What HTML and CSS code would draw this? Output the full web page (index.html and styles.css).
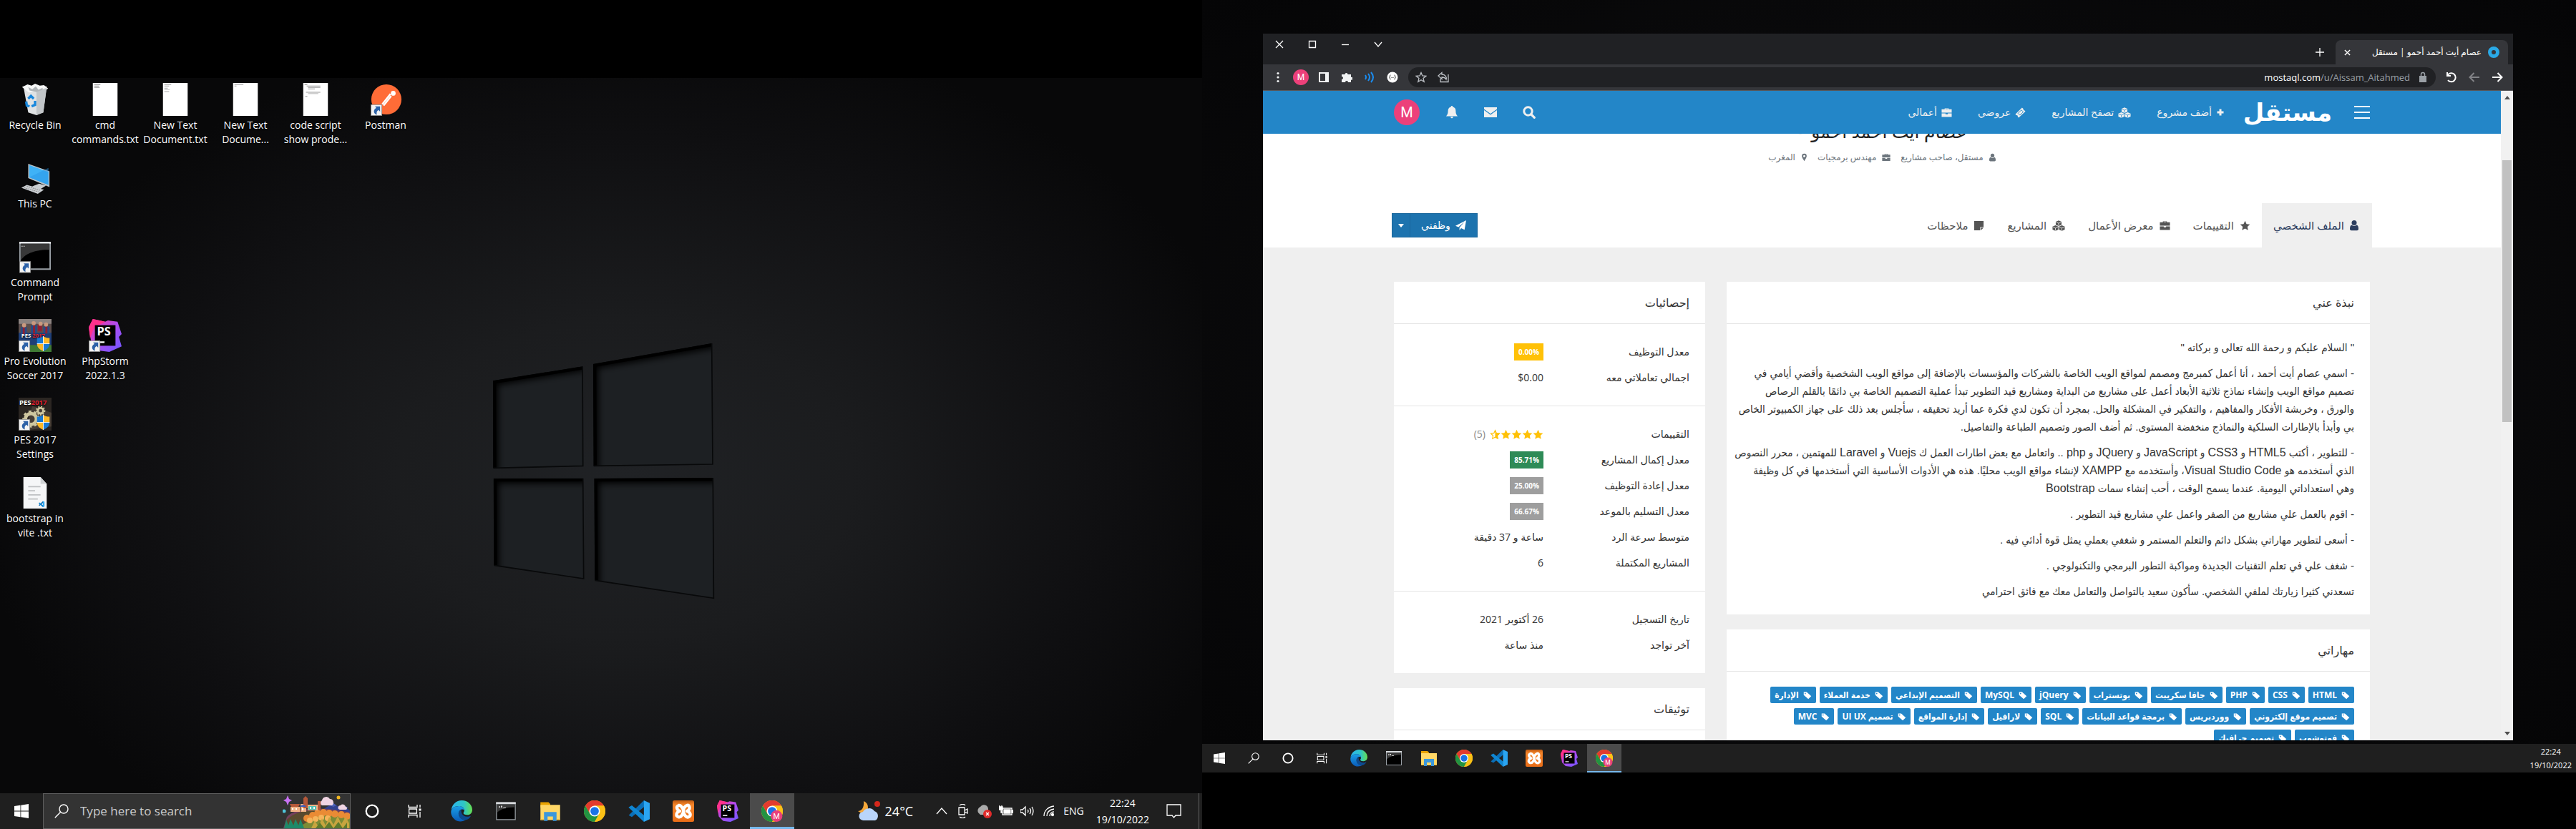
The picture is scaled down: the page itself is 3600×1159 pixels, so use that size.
FILE: index.html
```html
<!DOCTYPE html>
<html lang="en">
<head>
<meta charset="utf-8">
<title>Desktop</title>
<link rel="stylesheet" href="styles.css">
</head>
<body>
<svg class="defs" aria-hidden="true">
  <defs>
    <linearGradient id="gEdge" x1="0" y1="0" x2="1" y2="0"><stop offset="0" stop-color="#2bb5f0"/><stop offset=".6" stop-color="#2fc6c6"/><stop offset="1" stop-color="#66e04f"/></linearGradient>
    <linearGradient id="gEdge2" x1="0" y1="0" x2="0" y2="1"><stop offset="0" stop-color="#1a9fe8"/><stop offset="1" stop-color="#0a5bb8"/></linearGradient>
    <linearGradient id="gPs" x1="0" y1="0" x2="1" y2="1"><stop offset="0" stop-color="#ff318c"/><stop offset=".5" stop-color="#b04cf0"/><stop offset="1" stop-color="#6b57ff"/></linearGradient>
    <linearGradient id="gXampp" x1="0" y1="0" x2="0" y2="1"><stop offset="0" stop-color="#c05b12"/><stop offset=".2" stop-color="#f5852a"/><stop offset="1" stop-color="#e96d17"/></linearGradient>
    <filter id="soft" x="-20%" y="-20%" width="140%" height="140%"><feGaussianBlur stdDeviation="14"/></filter>
    <clipPath id="cTL"><path d="M153 250L528 190 530 607 154 616z"/></clipPath>
    <clipPath id="cTR"><path d="M573 180L1070 93 1074 600 575 607z"/></clipPath>
    <clipPath id="cBL"><path d="M155 660L530 659 533 1080 157 1024z"/></clipPath>
    <clipPath id="cBR"><path d="M577 660L1075 657 1078 1162 580 1087z"/></clipPath>
  </defs>
</svg>
<svg class="symbols" aria-hidden="true">
  <symbol id="i-win" viewBox="0 0 20 20"><path fill="#fff" d="M0 3l8.500-1.200V9.600H0zM9.300 1.700L20 0v9.600H9.300zM0 10.400h8.500v7.800L0 17zM9.300 10.400H20V20L9.300 18.300z"/></symbol>
  <symbol id="i-mag" viewBox="0 0 20 20"><g fill="none" stroke="#fff" stroke-width="1.400"><circle cx="13" cy="7" r="6"/><path d="M8.700 11.300L.8 19.200"/></g></symbol>
  <symbol id="i-cortana" viewBox="0 0 20 20"><circle cx="10" cy="10" r="8.300" fill="none" stroke="#fff" stroke-width="2.300"/></symbol>
  <symbol id="i-task" viewBox="0 0 20 20"><g fill="none" stroke="#fff" stroke-width="1.300"><path d="M1 1v3.500h12V1M1 19v-3.500h12V19M1.600 7h10.800v6H1.600zM17 1v4M17 11v8"/><path d="M15.500 6.500h3v3h-3z" fill="#fff" stroke="none"/></g></symbol>
  <symbol id="i-edge" viewBox="0 0 24 24"><path fill="url(#gEdge)" d="M.5 11C1 5 6 0 12.300 0 19 0 24 5 24 10.500c0 3.500-2.500 5.700-5.600 5.700-2.900 0-4.300-1-4.300-2 0-.8 1-1.400 1-3.200C15 8 12 6.300 9 6.300 4.500 6.300 1 8.500.5 11z"/><path fill="url(#gEdge2)" d="M.3 12C.8 8.500 4.500 6.300 9 6.300c3.500 0 6 2 6.100 4.500-3-2-6.400.5-6.400 4.200 0 4 4 7 7.800 6.800C14.500 23.500 8 25 4 21 1 18.400-.1 15.300.3 12z"/><path fill="#0c4a8f" d="M8.700 15c0-2.500 1.500-4.300 3.200-4.800-1 3 1 8 6.500 8 1.700 0 3-.5 4.200-1-1.500 3-4 4.800-6.800 4.800C12 22 8.700 19 8.700 15z"/></symbol>
  <symbol id="i-cmd" viewBox="0 0 24 24"><path fill="#9aa0a6" d="M1 2h22v20H1z"/><path fill="#d8dadd" d="M1 2h22v2H1z"/><path fill="#000" d="M2 4.500h20V21H2z"/><path fill="#3a3a3a" d="M2 4.500h20v3C12 7.500 5 10 2 14z"/><path fill="#ddd" d="M4 6.500h1.500V8H4zM6.500 6H8v2H6.500zM9 8h3v.8H9z"/></symbol>
  <symbol id="i-folder" viewBox="0 0 24 24"><path fill="#e8a200" d="M1 2h9l2 2v4H1z"/><path fill="#ffd766" d="M1 5h22v17H1z"/><path fill="#3b97dc" d="M5 13h14v10h-4v-5H9v5H5z"/><path fill="#e9b53a" d="M1 21h4v1H1zM19 21h4v1h-4z"/></symbol>
  <symbol id="i-chrome" viewBox="0 0 24 24"><circle cx="12" cy="12" r="12" fill="#fbc116"/><path fill="#e33b2e" d="M1.600 6A12 12 0 0 1 22.400 6H12l-5.200 9z"/><path fill="#229342" d="M1.600 6A12 12 0 0 0 12 24l5.200-9L12 12l-5.200 3z"/><path fill="#fbc116" d="M22.400 6H12l5.200 9L12 24A12 12 0 0 0 22.400 6z"/><circle cx="12" cy="12" r="6" fill="#fff"/><circle cx="12" cy="12" r="4.700" fill="#1a73e8"/></symbol>
  <symbol id="i-code" viewBox="0 0 24 24"><path fill="#0a6fb8" d="M17.500 0L18 7 4 18.500.5 16.500z"/><path fill="#0f86d2" d="M.5 7.500L4 5.500 18 17l-.5 7L.5 8z"/><path fill="#2aa5f2" d="M17.500 0L24 3v18l-6.500 3z"/></symbol>
  <symbol id="i-xampp" viewBox="0 0 24 24"><rect width="24" height="24" rx="2" fill="url(#gXampp)"/><path fill="none" stroke="#fff" stroke-width="3.400" stroke-linecap="round" stroke-linejoin="round" d="M7 5.500C3 7 5 11 8 12c-4 1-5 5.500-1.500 6.500S12 14 12 12s1-5 4-6.500 4.500 5 0 6.500c4 1 5 5 2 6.500S12 15 12 12 9 5 7 5.500z"/></symbol>
  <symbol id="i-ps" viewBox="0 0 24 24"><path fill="url(#gPs)" d="M0 6L3 0l9 2 2-1 7 1 3 9-2 2 2 7-9 4-8-1-5-5z"/><path fill="#ff318c" d="M0 6L3 0l9 2-8 4-3 8z"/><path fill="#000" d="M4.500 4.500h15v15h-15z"/><path fill="#fff" d="M6.500 16.300h5v1.200h-5z"/><text x="6" y="12" font-family="Open Sans, sans-serif" font-size="8.500" font-weight="700" fill="#fff">PS</text></symbol>
  <symbol id="i-chromem" viewBox="0 0 24 24"><use href="#i-chrome"/><circle cx="17" cy="17.500" r="6.500" fill="#e8407a"/><text x="17" y="20.500" text-anchor="middle" font-family="Roboto, sans-serif" font-size="8.500" fill="#fff">M</text></symbol>
  <symbol id="i-link" viewBox="0 0 16 16"><path fill="#f4f4f4" stroke="#8a8a8a" d="M.5.5h15v15H.5z"/><path fill="#2d62a8" d="M6 3h7v7l-2.200-2C8.500 9.500 8 11 8.500 14.500 4 13 3 8 7.800 5z"/></symbol>
  <symbol id="i-shield" viewBox="0 0 20 24"><path fill="#1979d3" d="M10 0v12H0V3c4 0 7-1 10-3z"/><path fill="#fdb827" d="M10 0v12h10V3c-4 0-7-1-10-3zM0 12h10v12C4 21 0 18 0 12z"/><path fill="#1979d3" d="M10 12h10c0 6-4 9-10 12z"/><path stroke="#fff" d="M10 0v24M0 12h20"/></symbol>
  <symbol id="f-plus" viewBox="0 0 16 16"><path d="M6 2h4v4h4v4h-4v4H6v-4H2V6h4z"/></symbol>
  <symbol id="f-cubes" viewBox="0 0 20 16"><path d="M10 0l4.500 2v4.500L10 8.500 5.500 6.500V2zM5 7.500L9.500 9.500V14L5 16 .5 14V9.500zM15 7.500l4.500 2V14L15 16l-4.500-2V9.500z"/><path fill="none" stroke="var(--cut,#fff)" stroke-width=".8" d="M6 2.500l4 1.700 4-1.700M10 4.200V8M1 10l4 1.700L9 10M5 11.700v4M11 10l4 1.700 4-1.700M15 11.700v4"/></symbol>
  <symbol id="f-ticket" viewBox="0 0 16 16"><path d="M10.500.5l2 2a1.500 1.500 0 0 0 1.500 2l1.500 1.500L5.500 15.500 4 14a1.500 1.500 0 0 0-2-2L.5 10.500z"/><path fill="none" stroke="var(--cut,#fff)" d="M9.500 4l2.800 2.800-5 5L4.500 9z"/></symbol>
  <symbol id="f-case" viewBox="0 0 16 16"><path d="M5 3V1.500h6V3h4.500v5h-15V3zM6.200 3h3.600v-.6H6.200zM.5 9h5.800v1.500h3.400V9h5.800v5.500H.5z"/></symbol>
  <symbol id="f-user" viewBox="0 0 12 16"><circle cx="6" cy="4.500" r="3.500"/><path d="M2.500 7.500C4 9.300 8 9.300 9.500 7.500 11.500 8 12 10.500 12 13c0 1.500-1 2.200-2 2.200H2c-1 0-2-.7-2-2.200 0-2.500.5-5 2.500-5.500z"/></symbol>
  <symbol id="f-pin" viewBox="0 0 10 16"><path fill-rule="evenodd" d="M5 1a4.500 4.500 0 0 1 4.500 4.500C9.500 8 7 11 5 15 3 11 .5 8 .5 5.500A4.500 4.500 0 0 1 5 1zm0 2.500a2 2 0 1 0 0 4 2 2 0 0 0 0-4z"/></symbol>
  <symbol id="f-star" viewBox="0 0 16 16"><path d="M8 .8l2.200 4.700 5.100.6-3.800 3.500 1 5.100L8 12.200l-4.500 2.500 1-5.100L.7 6.100l5.100-.6z"/></symbol>
  <symbol id="f-half" viewBox="0 0 16 16"><path fill="none" stroke="#ffc107" stroke-width="1.200" d="M8 1.800l1.900 4.200 4.500.5-3.300 3.100.9 4.500L8 11.900l-4 2.200.9-4.500L1.600 6.500 6.100 6z"/><path d="M8 .8l2.200 4.700 5.100.6-3.800 3.500 1 5.100L8 12.200z"/></symbol>
  <symbol id="f-note" viewBox="0 0 16 16"><path d="M1 1h14v9h-5v5H1zM11 11h4l-4 4z"/></symbol>
  <symbol id="f-plane" viewBox="0 0 16 16"><path d="M16 0l-2.500 14-5-2.200L6 15v-4.200L13.500 2 4.500 10 0 8.300z"/></symbol>
  <symbol id="f-tag" viewBox="0 0 16 16"><path fill-rule="evenodd" d="M1 2h5.500L15 9.500 9.500 15 1 7.500zM3.700 3.700a1.100 1.100 0 1 0 .1 2.200 1.100 1.100 0 0 0-.1-2.200z"/></symbol>
  <symbol id="f-bell" viewBox="0 0 18 20"><path d="M9 0c1 0 1.500.7 1.500 1.600C14 2.500 15 5 15 8c0 4 1 6 3 8H0c2-2 3-4 3-8 0-3 1-5.500 4.500-6.400C7.500.7 8 0 9 0zM7 17h4c0 3-4 3-4 0z"/></symbol>
  <symbol id="f-mail" viewBox="0 0 18 18"><path d="M0 2h18v2.500L9 11 0 4.500zM0 6l9 6.500L18 6v10H0z"/></symbol>
  <symbol id="f-search" viewBox="0 0 18 18"><circle cx="7.500" cy="7.500" r="5.700" fill="none" stroke="#efefef" stroke-width="3"/><path stroke="#efefef" stroke-width="3.200" stroke-linecap="round" d="M12 12l4.300 4.300"/></symbol>
</svg>

<div class="screens">
  <section class="screen primary">
    <div class="wallpaper">
      <svg class="winlogo" viewBox="0 0 1260 1260" aria-hidden="true">
        <g fill="#1d2023"><path d="M153 250L528 190 530 607 154 616z"/><path d="M573 180L1070 93 1074 600 575 607z"/><path d="M155 660L530 659 533 1080 157 1024z"/><path d="M577 660L1075 657 1078 1162 580 1087z"/></g>
        <g fill="none" stroke="#000" stroke-width="42">
          <g clip-path="url(#cTL)"><path filter="url(#soft)" d="M540 186L153 250 154 640"/><path d="M528 190L153 250 154 616" stroke-width="26"/></g>
          <g clip-path="url(#cTR)"><path filter="url(#soft)" d="M1090 90L573 180 575 630"/><path d="M1070 93L573 180 575 607" stroke-width="26"/></g>
          <g clip-path="url(#cBL)"><path filter="url(#soft)" d="M550 659L155 660 157 1050"/><path d="M530 659L155 660 157 1024" stroke-width="26"/></g>
          <g clip-path="url(#cBR)"><path filter="url(#soft)" d="M1095 657L577 660 580 1110"/><path d="M1075 657L577 660 580 1087" stroke-width="26"/></g>
        </g>
        <g fill="none" stroke="#08090a" stroke-width="5"><path d="M528 190L530 607 154 616M1070 93L1074 600 575 607M530 659L533 1080 157 1024M1075 657L1078 1162 580 1087"/></g>
      </svg>
      <ul class="icons">
        <li><svg viewBox="0 0 48 48"><path fill="#dfe2e4" d="M7 5l34 0-5 38-10 4-12-4z"/><path fill="#f7f8f8" d="M5 6l8-4 6 2 5-3 7 3 6-1 6 5-7 5-10-2-11 3z"/><path fill="#c2c6c9" d="M26 12l15-5-5 36-10 4z"/><path fill="#b0b5b8" d="M14 6l6 3 5-4 4 5 6-3v3l-9 3-10-2z"/><g fill="none" stroke="#1787dd" stroke-width="3.500"><path d="M14 23l4-4 4 4M24 26l0 6-5 2M11 27l1 6 4 1"/></g></svg><span>Recycle Bin</span></li>
        <li><svg viewBox="0 0 48 48"><path fill="#fff" d="M6 0h36v48H6z"/><path fill="#999" d="M8 2h9v1H8zM8 4h7v1H8zM8 6h8v1H8z"/></svg><span>cmd commands.txt</span></li>
        <li><svg viewBox="0 0 48 48"><path fill="#fff" d="M6 0h36v48H6z"/><path fill="#aaa" d="M8 2h10v1H8zM8 4h7v1H8zM8 7h5v1H8zM8 9h8v1H8zM8 12h7v1H8z"/></svg><span>New Text Document.txt</span></li>
        <li><svg viewBox="0 0 48 48"><path fill="#fff" d="M6 0h36v48H6z"/><path fill="#aaa" d="M8 2h13v1H8zM8 4h3v1H8z"/></svg><span>New Text Docume...</span></li>
        <li><svg viewBox="0 0 48 48"><path fill="#fff" d="M6 0h36v48H6z"/><path fill="#999" d="M8 2h4v1H8zM11 4h20v1H11zM13 6h18v1H13zM13 8h10v1H13zM10 13h21v1H10zM13 15h15v1H13zM9 19h3v1H9z"/></svg><span>code script show prode...</span></li>
        <li><svg viewBox="0 0 48 48"><circle cx="25" cy="24" r="22" fill="#ff6c37"/><g stroke="#fff" fill="none" stroke-width="2.500"><path d="M19 31l12-15M21 33l11-14"/></g><circle cx="35" cy="15" r="3.500" fill="#fff"/><use href="#i-link" x="2" y="31" width="17" height="17"/></svg><span>Postman</span></li>
        <li class="newrow"><svg viewBox="0 0 48 48"><path fill="#bcc3c9" d="M14 3l31 11v23L14 24z"/><path fill="#3fb2f6" d="M15.500 5l28 10v19l-28-11z"/><path fill="#2996e6" d="M15.500 23l28-14v25z" opacity=".5"/><path fill="#c9cdd1" d="M20 36l10-4 10 3-8 5zM4 38l8-4 25 7-9 6z"/><path stroke="#888" d="M8 38l21 6M12 36l20 6" stroke-dasharray="2 1"/></svg><span>This PC</span></li>
        <li class="newrow"><svg viewBox="0 0 48 48"><path fill="#9aa0a6" d="M1 2h46v41H1z"/><path fill="#e6e8ea" d="M1 2h46v3H1z"/><path fill="#000" d="M3 5h42v36H3z"/><path fill="#383838" d="M3 5h42v9C25 13 8 20 3 30z"/><path fill="#ccc" d="M4 8h2v1H4zM7 8h2v1H7z"/><use href="#i-link" x="1" y="30" width="17" height="18"/></svg><span>Command Prompt</span></li>
        <li class="newrow"><svg viewBox="0 0 48 48"><path fill="#5b4e4c" d="M0 0h48v48H0z"/><path fill="#8c8380" d="M0 0h48v7H0z"/><path fill="#1f3f77" d="M0 20h48v18H0z"/><path fill="#3f7a35" d="M0 38h48v10H0z"/><path fill="#274a86" d="M3 12h9v10H3zM18 9h9v12h-9zM36 11h9v10h-9z"/><path fill="#8e2033" d="M6 12h3v10H6zM21 9h3v12h-3zM39 11h3v10h-3zM28 8h6v10h-6z"/><g fill="#c99a80"><circle cx="8" cy="9" r="3"/><circle cx="22" cy="6" r="3"/><circle cx="32" cy="7" r="3"/><circle cx="40" cy="8" r="3"/></g><text x="4" y="27" font-family="Open Sans, sans-serif" font-size="8" font-weight="700" fill="#fff">PES <tspan fill="#e02030">2017</tspan></text><use href="#i-link" x="0" y="31" width="17" height="17"/><use href="#i-shield" x="26" y="25" width="20" height="22"/></svg><span>Pro Evolution Soccer 2017</span></li>
        <li><svg viewBox="0 0 48 48"><use href="#i-ps" width="48" height="48"/><use href="#i-link" x="0" y="31" width="17" height="17"/></svg><span>PhpStorm 2022.1.3</span></li>
        <li class="newrow"><svg viewBox="0 0 48 48"><path fill="#2b2622" d="M0 0h48v48H0z"/><path fill="#463d35" d="M20 12L48 22v20L10 48z"/><g fill="none" stroke="#cfc7a0"><circle cx="18" cy="31" r="8" stroke-width="5"/><circle cx="18" cy="31" r="11" stroke-width="3" stroke-dasharray="4 4"/><circle cx="32" cy="19" r="4" stroke-width="3"/><circle cx="32" cy="19" r="6" stroke-width="2" stroke-dasharray="2 2"/></g><text x="1" y="10" font-family="Open Sans, sans-serif" font-size="10" font-weight="700" fill="#fff">PES<tspan fill="#e02030">2017</tspan></text><use href="#i-link" x="0" y="31" width="17" height="17"/><use href="#i-shield" x="26" y="25" width="20" height="22"/></svg><span>PES 2017 Settings</span></li>
        <li class="newrow"><svg viewBox="0 0 48 48"><path fill="#f5f6f7" d="M7 1h25l9 10v36H7z"/><path fill="#cfd2d4" d="M32 1v10h9z"/><path fill="#bfc1c3" d="M14 14h18v2H14zM14 20h10v2H14zM14 26h18v2H14zM14 32h14v2H14z"/><use href="#i-code" x="29" y="36" width="9" height="9"/></svg><span>bootstrap in vite .txt</span></li>
      </ul>
    </div>
    <footer class="taskbar big">
      <button class="start" aria-label="Start"><svg><use href="#i-win"/></svg></button>
      <label class="search"><svg class="mag"><use href="#i-mag"/></svg><input type="text" placeholder="Type here to search" aria-label="Search">
        <svg class="art" viewBox="0 0 94 46"><path fill="#32418f" d="M50 24l12-8 9-5 9 6 7-1 7 5v7H50z"/><path fill="#4c5fb5" d="M66 14l5-3 4 3-4 2zM84 17l4-2 4 3z"/><path fill="#74405c" d="M1 46L6 30C18 16 60 16 94 24v22z"/><path fill="#594a2f" d="M6 34C20 18 55 18 94 26v20H3z"/><path fill="#7c8b35" d="M20 46L52 26l42 0v20z"/><g fill="#ea8b35"><circle cx="34" cy="32" r="5"/><circle cx="42" cy="28" r="5"/><circle cx="49" cy="25" r="5"/><circle cx="57" cy="24" r="5"/><circle cx="65" cy="25" r="5"/><circle cx="73" cy="26" r="5"/><circle cx="82" cy="27" r="5"/><circle cx="90" cy="29" r="5"/></g><g fill="#f7b45b"><circle cx="38" cy="35" r="4"/><circle cx="46" cy="33" r="4"/><circle cx="54" cy="31" r="4"/><circle cx="63" cy="32" r="4"/></g><path fill="#c7a53f" d="M40 46l5-11 5 9 5-12 5 10 5-12 6 11 6-12 5 11 6-10 5 9v7z"/><path fill="#5d7a2c" d="M46 46l6-8 6 8 7-9 6 9 7-9 6 9 6-8v8z"/><path fill="#1d8a69" d="M2 46l3-12 3 8 3-9 4 9 3-9 4 9 3-9 5 13z"/><path fill="#f0b186" d="M11 16h13v7H11zM25 12h8v11h-8zM35 13h14v8H35z"/><path fill="#b5583a" d="M10 12h14l-2 4H12zM29 4l3-3 3 3v14h-6zM49 8h4v12h-4z"/><path fill="#3b5fbf" d="M24 16a5 5 0 0 1 9 0z"/><path fill="#4fc1b5" d="M36 15h11v5H36z"/><path fill="#fff" d="M13 18h2v2h-2zM18 18h2v2h-2zM27 18h2v3h-2zM38 16h2v3h-2zM43 16h2v3h-2z"/><path fill="#f0d5e3" d="M55 14a4 4 0 0 1 0-7 6 6 0 0 1 11-2 5 5 0 0 1 3 9zM80 20a3 3 0 0 1 1-6 4 4 0 0 1 7 2 2 2 0 0 1 0 4z"/><circle cx="78" cy="3" r="2.500" fill="#f5b820"/><circle cx="2" cy="22" r="2.500" fill="#4fc7dd"/><path fill="#c973f5" d="M7 0l2 5 4 2-4 2-2 5-2-5-4-2 4-2z"/></svg>
      </label>
      <button aria-label="Cortana"><svg><use href="#i-cortana"/></svg></button>
      <button aria-label="Task view"><svg><use href="#i-task"/></svg></button>
      <nav class="apps">
        <button aria-label="Edge"><svg><use href="#i-edge"/></svg></button>
        <button aria-label="Command Prompt"><svg><use href="#i-cmd"/></svg></button>
        <button aria-label="File Explorer"><svg><use href="#i-folder"/></svg></button>
        <button aria-label="Chrome"><svg><use href="#i-chrome"/></svg></button>
        <button aria-label="VS Code"><svg><use href="#i-code"/></svg></button>
        <button aria-label="XAMPP"><svg><use href="#i-xampp"/></svg></button>
        <button aria-label="PhpStorm"><svg><use href="#i-ps"/></svg></button>
        <button class="active" aria-label="Chrome profile M"><svg><use href="#i-chromem"/></svg></button>
      </nav>
      <div class="weather"><svg viewBox="0 0 32 28"><path fill="#f5a83a" d="M8 0c8 3 8 14 0 19L0 14c5 0 9-5 8-14z"/><circle cx="27" cy="4" r="4" fill="#d4281c"/><path fill="#b9d5fa" d="M8 27a6 6 0 0 1-1-12 9 8 0 0 1 16-1 7 7 0 0 1 1 13z"/></svg><span>24°C</span></div>
      <div class="tray">
        <svg viewBox="0 0 20 20"><path d="M3 14l7-8 7 8"/></svg>
        <svg viewBox="0 0 20 20"><path d="M4 5h8v10H4zM12 9l4-2v6l-4-2M5 2c3-2 6-2 8 0M5 18c3 2 6 2 8 0"/></svg>
        <svg viewBox="0 0 20 20"><path fill="#aaa" stroke="none" d="M1 12a6 6 0 0 1 3-8 6 6 0 0 1 11 3v8H4z"/><circle cx="14" cy="14" r="6" fill="#e02b2b" stroke="none"/><path d="M12 12l4 4m0-4l-4 4"/></svg>
        <svg viewBox="0 0 20 20"><path d="M5 6h13v9H5z"/><path fill="#fff" d="M7 8h9v5H7zM18 9h2v3h-2zM0 4h5v4H0zM1 2v2M4 2v2M3 8v4h2"/></svg>
        <svg viewBox="0 0 20 20"><path d="M0 8h3l4-4v12l-4-4H0zM10 8q2 2 0 4M13 6q3 4 0 8M16 4q4 6 0 12"/></svg>
        <svg viewBox="0 0 20 20"><path d="M3 17C3 9 9 4 17 3M7 17c0-6 4-9 10-10M11 17c0-3 2-6 6-6"/><circle cx="15" cy="15" r="1.500" fill="#fff"/></svg>
        <span>ENG</span>
      </div>
      <time class="clock"><span>22:24</span><span>19/10/2022</span></time>
      <button class="notify" aria-label="Notifications"><svg viewBox="0 0 22 22"><path fill="none" stroke="#fff" stroke-width="1.300" d="M1 2h19v15h-7l-2.500 3L8 17H1z"/></svg></button>
    </footer>
  </section>

  <section class="screen secondary">
    <div class="desk">
      <div class="window" dir="rtl" lang="ar">
        <div class="titlebar">
          <div class="tab"><svg class="fav" viewBox="0 0 16 16"><circle cx="8" cy="8" r="5.500" fill="none" stroke="#2aa9e6" stroke-width="5"/></svg><span>عصام أيت أحمد أحمو | مستقل</span><button aria-label="إغلاق"><svg viewBox="0 0 10 10"><path d="M1 1l8 8m0-8L1 9"/></svg></button></div>
          <button class="newtab" aria-label="تبويب جديد"><svg viewBox="0 0 12 12"><path d="M6 0v12M0 6h12"/></svg></button>
          <div class="controls">
            <button aria-label="قائمة"><svg viewBox="0 0 12 12"><path d="M1 3l5 6 5-6"/></svg></button>
            <button aria-label="تصغير"><svg viewBox="0 0 12 12"><path d="M1 6.500h10"/></svg></button>
            <button aria-label="تكبير"><svg viewBox="0 0 12 12"><path d="M1.500 1.500h9v9h-9z"/></svg></button>
            <button aria-label="إغلاق النافذة"><svg viewBox="0 0 12 12"><path d="M1 1l10 10M11 1L1 11"/></svg></button>
          </div>
        </div>
        <div class="toolbar">
          <button aria-label="السابق"><svg viewBox="0 0 16 16"><path d="M1 8h13M8.500 2l6 6-6 6"/></svg></button>
          <button class="dim" aria-label="التالي"><svg viewBox="0 0 16 16"><path d="M15 8H2M7.500 2l-6 6 6 6"/></svg></button>
          <button aria-label="تحديث"><svg viewBox="0 0 16 16"><path d="M3 4.500A6 6 0 1 1 3 12M2 1v5h5"/></svg></button>
          <div class="omnibox">
            <svg class="lock" viewBox="0 0 12 16"><path fill="#9aa0a6" d="M1 6h10v9H1z"/><path fill="none" stroke="#9aa0a6" stroke-width="1.500" d="M3.500 6V4a2.500 2.500 0 0 1 5 0v2"/></svg>
            <span class="url" dir="ltr"><b>mostaql.com</b>/u/Aissam_Aitahmed</span>
            <button aria-label="مشاركة"><svg viewBox="0 0 16 16"><path d="M4 10v4.500h11V4M1 6l5-4.500V4c5 0 7 4 6 7-1-2-3-3-6-3v2.500z"/></svg></button>
            <button aria-label="إضافة إلى المفضلة"><svg viewBox="0 0 16 16"><path d="M8 1.500l1.900 4.500 4.800.4-3.700 3.200 1.200 4.700L8 11.800l-4.200 2.500L5 9.600 1.300 6.400 6.100 6z"/></svg></button>
          </div>
          <div class="exts">
            <svg viewBox="0 0 16 16"><circle cx="8" cy="8" r="7.500" fill="#fff"/><path fill="none" stroke="#333" d="M5.500 5Q4 5 4.500 7L3.500 8l1 1Q4 11 5.500 11M10.500 5Q12 5 11.500 7l1 1-1 1Q12 11 10.500 11M6.500 8.500h1M8.500 8.500h1"/></svg>
            <svg viewBox="0 0 16 16"><path fill="none" stroke="#1a8cf0" stroke-width="2" d="M2 5q2 3 0 6M6 3q4 5 0 10M10 1q6 7 0 14"/></svg>
            <svg viewBox="0 0 16 16"><path fill="#f1f3f4" d="M1 4h4.500a2 2 0 1 1 4 0H14v4a2 2 0 1 1 0 3.500V15h-4a2 2 0 0 0-4 0H1v-4a2 2 0 1 0 0-4z"/></svg>
            <svg viewBox="0 0 16 16"><path fill="none" stroke="#f1f3f4" stroke-width="2" d="M2 2h12v12H2z"/><path fill="#f1f3f4" d="M10 1h5v14h-5z"/></svg>
            <span class="who">M</span>
            <svg viewBox="0 0 16 16"><g fill="#f1f3f4"><circle cx="8" cy="2.500" r="1.600"/><circle cx="8" cy="8" r="1.600"/><circle cx="8" cy="13.500" r="1.600"/></g></svg>
          </div>
        </div>
        <div class="viewport">
          <div class="scroll" aria-hidden="true"><i class="up"></i><i class="thumb"></i><i class="down"></i></div>
          <div class="page">
            <header class="site">
              <div class="wrap">
                <button class="menu" aria-label="القائمة"><i></i><i></i><i></i></button>
                <a class="logo" href="#">مستقل</a>
                <nav>
                  <a href="#"><svg class="w12"><use href="#f-plus"/></svg>أضف مشروع</a>
                  <a href="#"><svg class="w18"><use href="#f-cubes"/></svg>تصفح المشاريع</a>
                  <a href="#"><svg class="w15"><use href="#f-ticket"/></svg>عروضي</a>
                  <a href="#"><svg class="w15"><use href="#f-case"/></svg>أعمالي</a>
                </nav>
                <div class="acts">
                  <button aria-label="بحث"><svg><use href="#f-search"/></svg></button>
                  <button aria-label="الرسائل"><svg><use href="#f-mail"/></svg></button>
                  <button aria-label="الإشعارات"><svg><use href="#f-bell"/></svg></button>
                  <a class="avatar" href="#">M</a>
                </div>
              </div>
            </header>
            <div class="profile">
              <h1>عصام أيت أحمد أحمو<i></i></h1>
              <ul class="meta">
                <li><svg class="w9"><use href="#f-user"/></svg>مستقل، صاحب مشاريع</li>
                <li><svg class="w12"><use href="#f-case"/></svg>مهندس برمجيات</li>
                <li><svg class="w9"><use href="#f-pin"/></svg>المغرب</li>
              </ul>
              <div class="tabs">
                <a class="on" href="#"><svg class="w12"><use href="#f-user"/></svg>الملف الشخصي</a>
                <a href="#"><svg class="w15"><use href="#f-star"/></svg>التقييمات</a>
                <a href="#"><svg class="w15"><use href="#f-case"/></svg>معرض الأعمال</a>
                <a href="#"><svg class="w18"><use href="#f-cubes"/></svg>المشاريع</a>
                <a href="#"><svg class="w15"><use href="#f-note"/></svg>ملاحظات</a>
                <div class="hire"><button><svg class="w15"><use href="#f-plane"/></svg>وظفني</button><button class="more" aria-label="المزيد"></button></div>
              </div>
            </div>
            <main class="wrap cols">
              <div class="col">
                <section class="card">
                  <h2>نبذة عني</h2>
                  <div class="bio">
                    <p>" السلام عليكم و رحمة الله تعالى و بركاته "</p>
                    <p>- اسمي عصام أيت أحمد ، أنا أعمل كمبرمج ومصمم لمواقع الويب الخاصة بالشركات والمؤسسات بالإضافة إلى مواقع الويب الشخصية وأقضي أيامي في<br>تصميم مواقع الويب وإنشاء نماذج ثلاثية الأبعاد أعمل على مشاريع من البداية ومشاريع قيد التطوير تبدأ عملية التصميم الخاصة بي دائمًا بالقلم الرصاص<br>والورق ، وخربشة الأفكار والمفاهيم ، والتفكير في المشكلة والحل. بمجرد أن تكون لدي فكرة عما أريد تحقيقه ، سأجلس بعد ذلك على جهاز الكمبيوتر الخاص<br>بي وأبدأ بالإطارات السلكية والنماذج منخفضة المستوى. ثم أضف الصور وتصميم الطباعة والتفاصيل.</p>
                    <p>- للتطوير ، أكتب <bdi>HTML5</bdi> و <bdi>CSS3</bdi> و <bdi>JavaScript</bdi> و <bdi>JQuery</bdi> و <bdi>php</bdi> .. واتعامل مع بعض اطارات العمل ك <bdi>Vuejs</bdi> و <bdi>Laravel</bdi> للمهتمين ، محرر النصوص<br>الذي أستخدمه هو <bdi>Visual Studio Code</bdi>، وأستخدمه مع <bdi>XAMPP</bdi> لإنشاء مواقع الويب محليًا. هذه هي الأدوات الأساسية التي أستخدمها في كل وظيفة<br>وهي استعداداتي اليومية. عندما يسمح الوقت ، أحب إنشاء سمات <bdi>Bootstrap</bdi></p>
                    <p>- اقوم بالعمل علي مشاريع من الصفر واعمل علي مشاريع قيد التطوير .</p>
                    <p>- أسعى لتطوير مهاراتي بشكل دائم والتعلم المستمر و شغفي بعملي يمثل قوة أدائي فيه .</p>
                    <p>- شغف علي في تعلم التقنيات الجديدة ومواكبة التطور البرمجي والتكنولوجي .</p>
                    <p>تسعدني كثيرا زيارتك لملفي الشخصي. سأكون سعيد بالتواصل والتعامل معك مع فائق احترامي</p>
                  </div>
                </section>
                <section class="card">
                  <h2>مهاراتي</h2>
                  <div class="skills">
                    <div class="tags"><a href="#"><svg><use href="#f-tag"/></svg>HTML</a><a href="#"><svg><use href="#f-tag"/></svg>CSS</a><a href="#"><svg><use href="#f-tag"/></svg>PHP</a><a href="#"><svg><use href="#f-tag"/></svg>جافا سكريبت</a><a href="#"><svg><use href="#f-tag"/></svg>بوتستراب</a><a href="#"><svg><use href="#f-tag"/></svg>jQuery</a><a href="#"><svg><use href="#f-tag"/></svg>MySQL</a><a href="#"><svg><use href="#f-tag"/></svg>التصميم الإبداعي</a><a href="#"><svg><use href="#f-tag"/></svg>خدمة العملاء</a><a href="#"><svg><use href="#f-tag"/></svg>الإدارة</a></div>
                    <div class="tags"><a href="#"><svg><use href="#f-tag"/></svg>تصميم موقع إلكتروني</a><a href="#"><svg><use href="#f-tag"/></svg>ووردبريس</a><a href="#"><svg><use href="#f-tag"/></svg>برمجة قواعد البيانات</a><a href="#"><svg><use href="#f-tag"/></svg>SQL</a><a href="#"><svg><use href="#f-tag"/></svg>لارافيل</a><a href="#"><svg><use href="#f-tag"/></svg>إدارة المواقع</a><a href="#"><svg><use href="#f-tag"/></svg>تصميم UI UX</a><a href="#"><svg><use href="#f-tag"/></svg>MVC</a></div>
                    <div class="tags"><a href="#"><svg><use href="#f-tag"/></svg>فوتوشوب</a><a href="#"><svg><use href="#f-tag"/></svg>تصميم جرافيك</a></div>
                  </div>
                </section>
              </div>
              <aside class="col">
                <section class="card">
                  <h2>إحصائيات</h2>
                  <dl><dt>معدل التوظيف</dt><dd><span class="pct gold">0.00%</span></dd><dt>اجمالي تعاملاتي معه</dt><dd><bdi dir="ltr">$0.00</bdi></dd></dl>
                  <dl><dt>التقييمات</dt><dd class="stars"><svg><use href="#f-star"/></svg><svg><use href="#f-star"/></svg><svg><use href="#f-star"/></svg><svg><use href="#f-star"/></svg><svg><use href="#f-half"/></svg><span>(5)</span></dd><dt>معدل إكمال المشاريع</dt><dd><span class="pct green">85.71%</span></dd><dt>معدل إعادة التوظيف</dt><dd><span class="pct">25.00%</span></dd><dt>معدل التسليم بالموعد</dt><dd><span class="pct">66.67%</span></dd><dt>متوسط سرعة الرد</dt><dd>ساعة و 37 دقيقة</dd><dt>المشاريع المكتملة</dt><dd>6</dd></dl>
                  <dl><dt>تاريخ التسجيل</dt><dd>26 أكتوبر 2021</dd><dt>آخر تواجد</dt><dd>منذ ساعة</dd></dl>
                </section>
                <section class="card">
                  <h2>توثيقات</h2>
                  <dl><dt></dt><dd></dd></dl>
                </section>
              </aside>
            </main>
          </div>
        </div>
      </div>
    </div>
    <footer class="taskbar">
      <button aria-label="Start"><svg><use href="#i-win"/></svg></button>
      <button aria-label="Search"><svg><use href="#i-mag"/></svg></button>
      <button aria-label="Cortana"><svg><use href="#i-cortana"/></svg></button>
      <button aria-label="Task view"><svg><use href="#i-task"/></svg></button>
      <nav class="apps">
        <button aria-label="Edge"><svg><use href="#i-edge"/></svg></button>
        <button aria-label="Command Prompt"><svg><use href="#i-cmd"/></svg></button>
        <button aria-label="File Explorer"><svg><use href="#i-folder"/></svg></button>
        <button aria-label="Chrome"><svg><use href="#i-chrome"/></svg></button>
        <button aria-label="VS Code"><svg><use href="#i-code"/></svg></button>
        <button aria-label="XAMPP"><svg><use href="#i-xampp"/></svg></button>
        <button aria-label="PhpStorm"><svg><use href="#i-ps"/></svg></button>
        <button class="active" aria-label="Chrome profile M"><svg><use href="#i-chromem"/></svg></button>
      </nav>
      <time class="clock"><span>22:24</span><span>19/10/2022</span></time>
    </footer>
  </section>
</div>
</body>
</html>
```

FILE: styles.css
```css
* { box-sizing: border-box; }
html, body { height: 100%; }
body { margin: 0; overflow: hidden; background: #000; color: #fff; font: 14px/20px "Open Sans", "DejaVu Sans", sans-serif; }
ul, dl, dd, h1, h2, p { margin: 0; padding: 0; }
ul { list-style: none; }
button { display: grid; place-items: center; margin: 0; padding: 0; border: 0; background: none; color: inherit; font: inherit; }
a { color: inherit; text-decoration: none; }
svg { display: block; flex: none; fill: currentColor; }
.defs { position: absolute; width: 0; height: 0; }
.symbols { display: none; }

.screens { display: grid; grid-template: minmax(0, 1fr) / 1680fr 1920fr; height: 100vh; }
.screen { display: flex; flex-direction: column; min-width: 0; min-height: 0; }
.primary { padding-top: 109px; }
.secondary { padding-bottom: 79px; }

/* left desktop */
.wallpaper { position: relative; flex: 1; min-height: 0; overflow: hidden; background: radial-gradient(ellipse 54% 64% at 52% 56%, #202225 0, #1b1c1e 35%, #0f0f11 75%, #080809 100%); }
.winlogo { position: absolute; left: 38%; top: 34%; width: 25%; }
.icons { position: relative; display: grid; grid-template-columns: repeat(6, 98px); grid-auto-rows: 110px; padding-top: 7px; }
.icons li { display: flex; flex-direction: column; align-items: center; gap: 3px; text-align: center; text-shadow: 0 1px 2px #000; }
.icons svg { width: 46px; height: 46px; }
.icons span { max-width: 96px; }
.newrow { grid-column: 1; }

/* taskbars */
.taskbar { display: flex; align-items: stretch; height: 40px; background: #1f1f1f; }
.taskbar button { width: 48px; }
.taskbar button svg { width: 16px; height: 16px; }
.taskbar .apps { display: flex; gap: 1px; padding-left: 3px; }
.taskbar .apps svg { width: 24px; height: 24px; }
.taskbar .active { background: #4b4b4b; box-shadow: inset 0 -2px #76b9ed; }
.clock { display: flex; flex-direction: column; justify-content: center; align-items: center; margin-left: auto; padding-right: 6px; font-size: 11px; line-height: 19px; }
.taskbar.big { height: 50px; }
.big button { width: 60px; }
.big button svg { width: 20px; height: 20px; }
.big .apps { gap: 0; padding-left: 4px; }
.big .apps button { width: 62px; }
.big .apps svg { width: 30px; height: 30px; }
.big .active { box-shadow: inset 0 -3px #76b9ed; }
.search { display: flex; align-items: center; width: 430px; border: 1px solid #5e5e5e; background: #333; }
.mag { width: 20px; height: 20px; margin: 0 16px 0 15px; }
.search input { flex: 1; min-width: 0; padding: 0; border: 0; outline: 0; background: none; color: #ccc; font: 17px/24px "Open Sans", sans-serif; }
.search input::placeholder { color: #ccc; opacity: 1; }
.art { align-self: flex-end; width: 94px; height: 46px; }
.weather { display: flex; align-items: center; gap: 6px; margin-left: auto; font-size: 18px; }
.weather svg { width: 32px; height: 28px; }
.tray { display: flex; align-items: center; gap: 10px; margin-left: 30px; font-size: 14px; }
.tray svg { width: 20px; height: 20px; fill: none; stroke: #fff; stroke-width: 1.3px; }
.big .clock { margin-left: 17px; padding: 0; font-size: 14px; line-height: 23px; }
.big .notify { width: 70px; margin-right: 4px; border-right: 1px solid #666; }
.big .notify svg { width: 22px; height: 22px; }

/* browser window */
.desk { flex: 1; display: flex; min-height: 0; padding: 47px 88px 5px 85px; background: radial-gradient(ellipse at 50% 50%, #101012, #050506); }
.window { flex: 1; display: flex; flex-direction: column; min-width: 0; background: #fff; }
.titlebar { display: flex; height: 43px; background: #202124; }
.tab { display: flex; align-items: center; width: 241px; height: 34px; margin: 9px 7px 0 0; padding: 0 12px; gap: 9px; border-radius: 8px 8px 0 0; background: #35363a; font-size: 12px; }
.tab span { flex: 1; white-space: nowrap; }
.fav { width: 16px; height: 16px; }
.window button svg { fill: none; stroke: currentColor; stroke-width: 1.3px; }
.tab button svg { width: 9px; height: 9px; stroke-width: 1.6px; }
.newtab { width: 28px; margin: 9px 8px 0 0; }
.newtab svg { width: 12px; height: 12px; stroke-width: 2px; }
.controls { display: flex; margin-right: auto; }
.controls button { width: 46px; height: 30px; }
.controls svg { width: 12px; height: 12px; }
.toolbar { display: flex; align-items: center; height: 37px; padding: 0 6px; border-bottom: 1px solid #56575a; background: #35363a; }
.toolbar > button { width: 32px; }
.toolbar > button svg { width: 16px; height: 16px; stroke-width: 2px; }
.toolbar .dim { color: #828387; }
.omnibox { flex: 1; display: flex; align-items: center; height: 28px; margin-right: 6px; padding: 0 12px; border-radius: 14px; background: #202124; color: #bdc1c6; }
.lock { width: 12px; height: 16px; margin-left: 12px; }
.url { margin-left: auto; color: #9aa0a6; font-size: 13px; }
.url b { color: #fff; font-weight: 400; }
.omnibox button { width: 32px; margin-left: -1px; }
.omnibox button:last-child { margin-left: -10px; }
.omnibox button svg { width: 16px; height: 16px; }
.exts { display: flex; align-items: center; gap: 16px; padding-right: 14px; margin-left: 7px; }
.exts svg { width: 16px; height: 16px; }
.who { width: 22px; margin: 0 -3px; border-radius: 50%; background: #ec407a; font: 12px/22px Roboto, sans-serif; text-align: center; }

/* site */
.viewport { flex: 1 1 0px; display: flex; min-height: 0; }
.page { flex: 1; min-width: 0; overflow: hidden; background: #efefef; color: #333; }
.wrap { width: 1364px; max-width: 100%; margin: 0 auto; }
.site { position: relative; z-index: 1; background: #2386c8; color: #efefef; --cut: #2386c8; }
.site .wrap { display: flex; align-items: center; height: 60px; }
.menu { width: 22px; gap: 6px; align-content: center; }
.menu i { width: 22px; height: 2px; background: #fff; }
.logo { width: 121px; margin: 0 31px 0 29px; color: #fff; font: 700 34px/60px "DejaVu Sans", sans-serif; text-align: center; white-space: nowrap; }
.site nav { display: flex; gap: 36px; }
.site nav a, .tabs a, .meta li { display: flex; align-items: center; gap: 6px; white-space: nowrap; }
.w9 { width: 9px; height: 12px; }
.w12 { width: 12px; height: 16px; }
.w15 { width: 15px; height: 15px; }
.w18 { width: 18px; height: 15px; }
.acts { display: flex; align-items: center; gap: 36px; margin-right: auto; }
.acts button { width: 18px; }
.window .acts button svg { width: 18px; height: 18px; fill: currentColor; stroke: none; }
.avatar { width: 36px; border-radius: 50%; background: #ec407a; color: #fff; font: 20px/36px Roboto, sans-serif; text-align: center; }
.profile { background: #fff; }
.profile h1 { display: flex; justify-content: center; align-items: center; gap: 10px; margin-top: -28px; font-size: 25px; line-height: 48px; font-weight: 400; color: #222; }
.profile h1 i { width: 10px; height: 10px; border-radius: 50%; background: #ddd; }
.meta { display: flex; justify-content: center; gap: 14px; padding-top: 1px; color: #6c757d; font-size: 12px; line-height: 24px; }
.meta li { gap: 8px; }
.tabs { display: flex; align-items: stretch; width: 1370px; max-width: 100%; height: 62px; margin: 52px auto 0; color: #555; font-size: 15px; }
.tabs a { gap: 8px; padding: 0 16px; }
.tabs .on { padding-right: 19px; background: #efefef; color: #2c3e5f; }
.hire { display: flex; align-self: center; height: 34px; margin-right: auto; background: #1d73ae; color: #fff; border: 1px solid #1a679c; font-size: 14px; }
.window .hire button { display: flex; align-items: center; gap: 7px; width: auto; padding: 0 15px; }
.window .hire button svg { fill: #fff; stroke: none; }
.window .hire .more { width: 25px; padding: 0; justify-content: center; border-right: 1px solid #1a679c; }
.more::before { content: ""; border: 4px solid transparent; border-top: 5px solid #fff; border-bottom: 0; }
.cols { display: grid; grid-template-columns: 899fr 435fr; gap: 30px; padding-top: 48px; }
.col { min-width: 0; }
.card { margin-bottom: 21px; background: #fff; }
.card h2 { padding: 0 22px; border-bottom: 1px solid #e5e5e5; font-size: 16px; line-height: 58px; font-weight: 400; }
.bio { padding: 20px 22px; font: 15px/25px "Liberation Sans", "DejaVu Sans Condensed", "DejaVu Sans", sans-serif; white-space: nowrap; }
.bio p + p { margin-top: 11px; }
.bio bdi { font-size: 16px; }
.skills { display: grid; gap: 7px; padding: 21px 22px; }
.tags { display: flex; gap: 5px; }
.tags a { display: flex; align-items: center; gap: 6px; height: 23px; padding: 0 6px; border-radius: 2px; background: #2386c8; color: #fff; font: 700 12px/20px "Open Sans", "DejaVu Sans Condensed", "DejaVu Sans", sans-serif; white-space: nowrap; }
.tags svg { width: 12px; height: 12px; }
.card dl { display: grid; grid-template-columns: 204px 1fr; padding: 21px 22px; line-height: 36px; }
.card dl + dl { border-top: 1px solid #e5e5e5; }
.card dd { display: flex; align-items: center; }
.pct { padding: 0 6px; background: #9e9e9e; color: #fff; font-size: 10px; line-height: 24px; font-weight: 700; }
.gold { background: #ffc107; }
.green { background: #2e8b57; }
.stars { color: #ffc107; }
.stars svg { width: 15px; height: 15px; }
.stars span { margin-right: 6px; color: #888; }
.scroll { display: flex; flex-direction: column; align-items: center; width: 17px; padding: 7px 0; background: #f1f1f1; }
.up { border: 4px solid transparent; border-bottom: 5px solid #505050; border-top: 0; }
.thumb { width: 13px; height: 366px; margin-top: 85px; background: #c1c1c1; }
.down { margin-top: auto; border: 4px solid transparent; border-top: 5px solid #505050; border-bottom: 0; }
```
